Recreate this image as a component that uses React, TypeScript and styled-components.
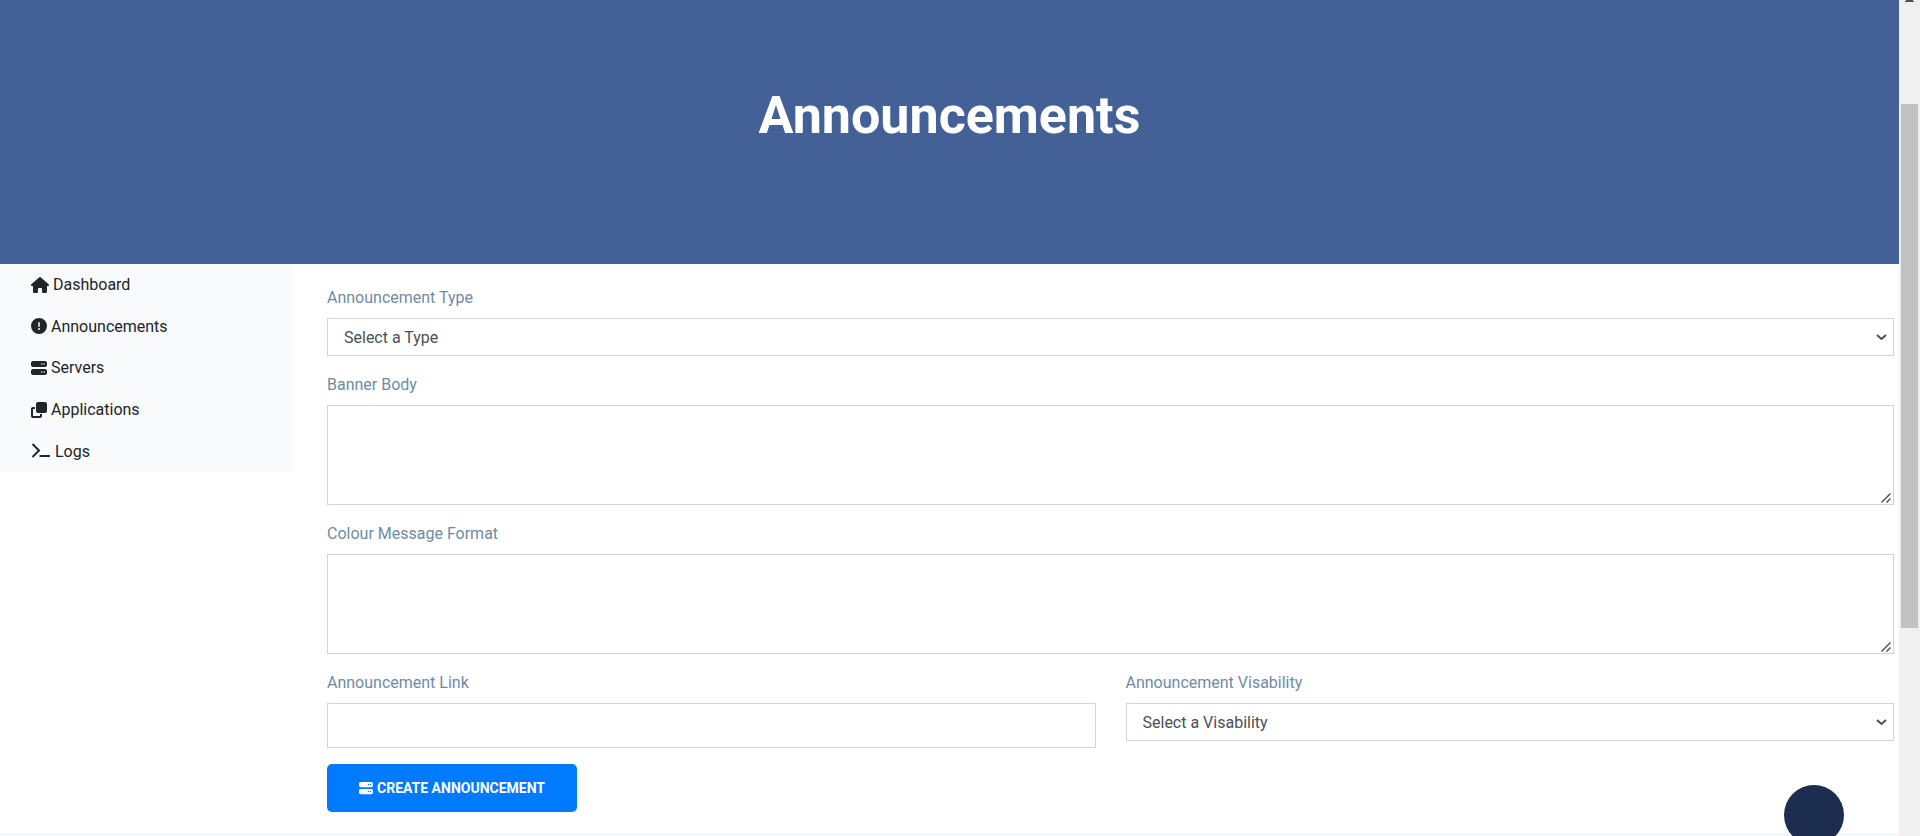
import React from 'react';
import styled, { createGlobalStyle } from 'styled-components';
import { FaHouse, FaCircleExclamation, FaServer, FaClone } from 'react-icons/fa6';

const GlobalStyle = createGlobalStyle`
  *, *::before, *::after { box-sizing: border-box; }
  body {
    margin: 0;
    background: #fff;
    color: #212529;
    font: 400 16px/25px Roboto, "Noto Sans", sans-serif;
  }
`;

const Window = styled.div`
  position: relative;
  display: flex;
  height: 100vh;
  overflow: hidden;
`;

const Page = styled.div`
  flex: 1;
  min-width: 0;
  display: flex;
  flex-direction: column;
  overflow: hidden;
`;

const Hero = styled.header`
  flex: none;
  display: flex;
  justify-content: center;
  padding: 84px 16px 116px;
  background: #446197;
`;

const Title = styled.h1`
  margin: 0;
  color: #fff;
  font: 700 52px/64px Roboto, "Noto Sans", sans-serif;
`;

const Columns = styled.div`
  flex: none;
  display: flex;
  align-items: flex-start;
`;

const Sidebar = styled.nav`
  flex: none;
  width: 292px;
  min-height: 208px;
  display: grid;
  grid-auto-rows: 1fr;
  background: #f8fafc;
`;

const NavLink = styled.a<{ $iconWidth: number }>`
  display: flex;
  align-items: center;
  gap: 4px;
  padding: 8px 31px;
  color: #212529;
  text-decoration: none;

  svg {
    flex: none;
    width: ${(p) => p.$iconWidth}px;
    height: 16px;
  }
`;

const Form = styled.form`
  flex: 1;
  min-width: 0;
  display: flex;
  flex-direction: column;
  gap: 16px;
  padding: 21px 5px 21px 35px;
`;

const Field = styled.div`
  flex: 1;
  min-width: 0;
  display: flex;
  flex-direction: column;
  gap: 8px;
`;

const FieldRow = styled.div`
  display: flex;
  align-items: flex-start;
  gap: 30px;
`;

const Label = styled.label`
  color: #6f8ba4;
`;

const ControlBox = styled.div`
  position: relative;
`;

const Select = styled.select`
  display: block;
  appearance: none;
  width: 100%;
  height: 38px;
  padding: 0 32px 0 16px;
  border: 1px solid #ced4da;
  border-radius: 0;
  background: #fff;
  color: #495057;
  font: inherit;
`;

const Chevron = styled.svg`
  position: absolute;
  right: 7px;
  top: 16px;
  width: 11px;
  height: 7px;
  pointer-events: none;
`;

const TextArea = styled.textarea`
  display: block;
  width: 100%;
  height: 100px;
  padding: 6px 12px;
  border: 1px solid #ced4da;
  border-radius: 0;
  background: #fff;
  color: #495057;
  font: inherit;
  resize: none;
`;

const Grip = styled.svg`
  position: absolute;
  right: 3px;
  bottom: 2px;
  width: 10px;
  height: 10px;
  pointer-events: none;
`;

const Input = styled.input`
  width: 100%;
  height: 45px;
  padding: 6px 12px;
  border: 1px solid #ced4da;
  border-radius: 0;
  background: #fff;
  color: #495057;
  font: inherit;
`;

const SubmitButton = styled.button`
  align-self: flex-start;
  display: flex;
  align-items: center;
  justify-content: center;
  gap: 4px;
  min-width: 250px;
  height: 48px;
  padding: 0 32px;
  border: 0;
  border-radius: 5px;
  background: #007bff;
  color: #fff;
  font: 700 14px/20px Roboto, "Noto Sans", sans-serif;
  text-transform: uppercase;
  white-space: nowrap;

  svg {
    width: 14px;
    height: 14px;
  }
`;

const Footer = styled.footer`
  flex: 1;
  background: #f4f8fb;
`;

const FloatingButton = styled.button`
  position: absolute;
  right: 76px;
  bottom: -9px;
  width: 60px;
  height: 60px;
  padding: 0;
  border: 0;
  border-radius: 50%;
  background: #1c2d50;
`;

const ScrollTrack = styled.div`
  flex: none;
  width: 21px;
  display: flex;
  flex-direction: column;
  align-items: center;
  background: #f0f0f0;
`;

const ScrollArrow = styled.svg`
  flex: none;
  display: block;
  width: 17px;
  height: 104px;
`;

const ScrollThumb = styled.div`
  width: 17px;
  height: 524px;
  background: #c1c1c1;
`;

function TerminalIcon() {
  return (
    <svg viewBox="0 0 20 16" fill="none" stroke="currentColor" strokeWidth="2" aria-hidden="true">
      <path d="M1.500 1 8 7.500l-6.500 6.500" />
      <path d="M8.500 13h10.500" />
    </svg>
  );
}

const links = [
  { label: 'Dashboard', Icon: FaHouse, iconWidth: 18 },
  { label: 'Announcements', Icon: FaCircleExclamation, iconWidth: 16 },
  { label: 'Servers', Icon: FaServer, iconWidth: 16 },
  { label: 'Applications', Icon: FaClone, iconWidth: 16 },
  { label: 'Logs', Icon: TerminalIcon, iconWidth: 20 },
];

function SelectBox({ id, placeholder }: { id: string; placeholder: string }) {
  return (
    <ControlBox>
      <Select id={id}>
        <option>{placeholder}</option>
      </Select>
      <Chevron viewBox="0 0 11 7" aria-hidden="true">
        <path d="M1 1l4.500 4L10 1" fill="none" stroke="#495057" strokeWidth="2" />
      </Chevron>
    </ControlBox>
  );
}

function TextBox({ id }: { id: string }) {
  return (
    <ControlBox>
      <TextArea id={id} />
      <Grip viewBox="0 0 10 10" aria-hidden="true">
        <path d="M0.500 9.500l9-9M5.500 9.500l4-4" fill="none" stroke="#555" strokeWidth="1.500" />
      </Grip>
    </ControlBox>
  );
}

export default function App() {
  return (
    <Window>
      <GlobalStyle />
      <Page>
        <Hero>
          <Title>Announcements</Title>
        </Hero>
        <Columns>
          <Sidebar>
            {links.map(({ label, Icon, iconWidth }) => (
              <NavLink key={label} href="#" $iconWidth={iconWidth}>
                <Icon />
                {label}
              </NavLink>
            ))}
          </Sidebar>
          <Form onSubmit={(e) => e.preventDefault()}>
            <Field>
              <Label htmlFor="type">Announcement Type</Label>
              <SelectBox id="type" placeholder="Select a Type" />
            </Field>
            <Field>
              <Label htmlFor="body">Banner Body</Label>
              <TextBox id="body" />
            </Field>
            <Field>
              <Label htmlFor="format">Colour Message Format</Label>
              <TextBox id="format" />
            </Field>
            <FieldRow>
              <Field>
                <Label htmlFor="link">Announcement Link</Label>
                <Input id="link" type="text" />
              </Field>
              <Field>
                <Label htmlFor="visability">Announcement Visability</Label>
                <SelectBox id="visability" placeholder="Select a Visability" />
              </Field>
            </FieldRow>
            <SubmitButton type="submit">
              <FaServer />
              Create Announcement
            </SubmitButton>
          </Form>
        </Columns>
        <Footer />
      </Page>
      <ScrollTrack>
        <ScrollArrow viewBox="0 0 17 104" aria-hidden="true">
          <path d="M5 0h7v1h1v1H4V1h1z" fill="#505050" />
        </ScrollArrow>
        <ScrollThumb />
      </ScrollTrack>
      <FloatingButton type="button" aria-label="Back to top" />
    </Window>
  );
}
